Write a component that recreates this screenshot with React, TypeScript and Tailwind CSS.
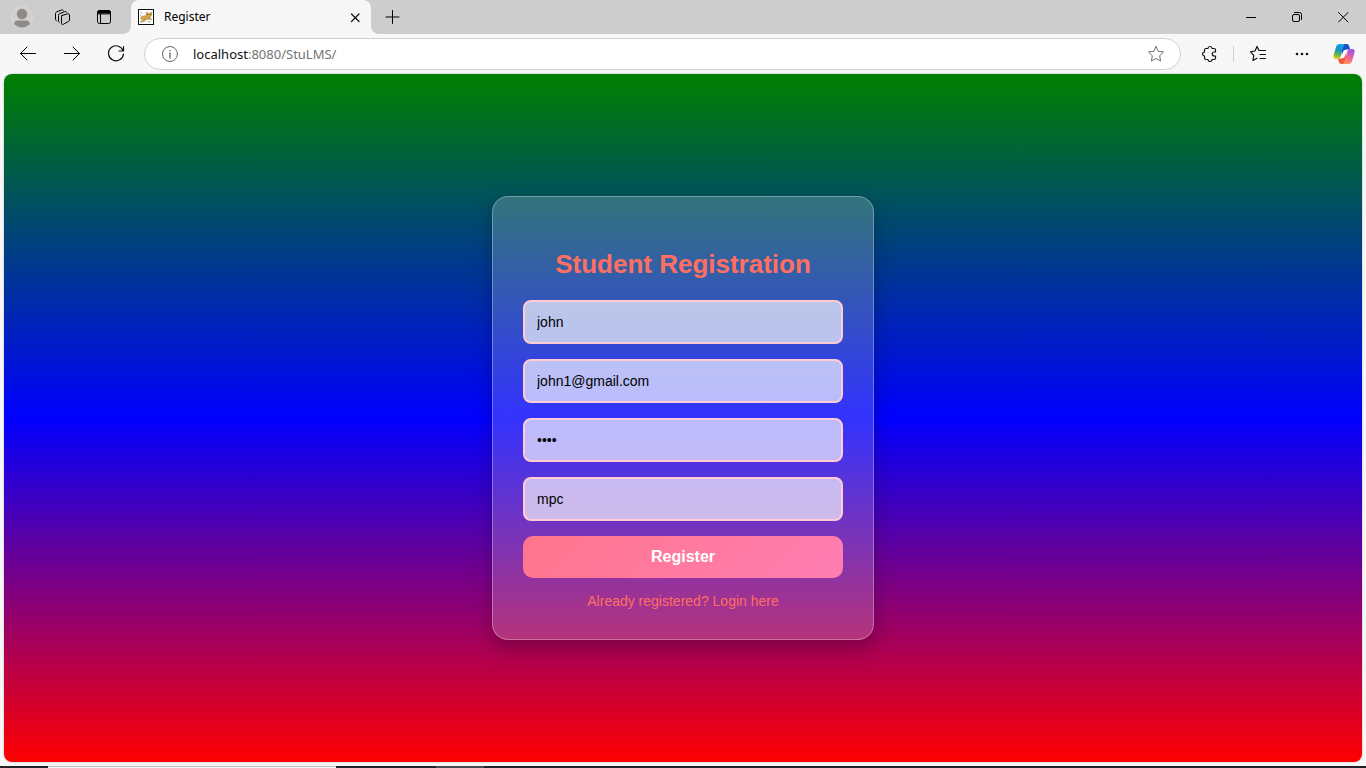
import React, { useState } from "react";

type IconProps = { size?: number; className?: string; stroke?: number; children: React.ReactNode };

function Icon({ size = 16, className = "", stroke = 1, children }: IconProps) {
  return (
    <svg
      width={size}
      height={size}
      viewBox={`0 0 ${size} ${size}`}
      fill="none"
      stroke="currentColor"
      strokeWidth={stroke}
      strokeLinecap="round"
      strokeLinejoin="round"
      className={`shrink-0 ${className}`}
      aria-hidden="true"
    >
      {children}
    </svg>
  );
}

const iconButton = "flex shrink-0 items-center justify-center text-black";

function ProfileIcon() {
  return (
    <svg width="22" height="22" viewBox="0 0 22 22" aria-hidden="true">
      <defs>
        <clipPath id="avatar">
          <circle cx="11" cy="11" r="10.500" />
        </clipPath>
      </defs>
      <circle cx="11" cy="11" r="10.500" fill="#d2d0ce" stroke="#dcdad6" />
      <g fill="#8f8b88" clipPath="url(#avatar)">
        <circle cx="11" cy="8" r="5.200" />
        <path d="M3 22v-3.500c0-2.800 1.500-4 4.300-4h7.400c2.800 0 4.300 1.200 4.300 4V22z" />
      </g>
    </svg>
  );
}

function CatIcon() {
  return (
    <svg width="16" height="16" viewBox="0 0 16 16" aria-hidden="true">
      <rect x="0.500" y="0.500" width="15" height="15" fill="#fff" stroke="#111" />
      <path d="M2.500 9.500C3.500 7.500 5.500 6.500 8 6.800L8.500 3l1.700 1.300h1.600L13.500 3v3.500L12 8.300l1.800 2.700-2.800-.8-2.500.3-2.500 2-3 .5 1.500-2z" fill="#d2a24b" stroke="#a87b35" strokeWidth="0.5" />
      <path d="M2 13.300 4.500 12M2 6.500l2 1M2.500 4.500 4 3.500M9.500 12.500l3 .5" stroke="#888" strokeWidth="0.800" />
      <path d="M9.500 5.500h.8M11.800 5.500h.8" stroke="#222" strokeWidth="0.800" />
    </svg>
  );
}

function CopilotIcon() {
  return (
    <svg width="22" height="22" viewBox="0 0 22 22" aria-hidden="true">
      <defs>
        <linearGradient id="cool" x1="0.6" y1="0" x2="0.35" y2="1">
          <stop offset="0" stopColor="#12a5e8" />
          <stop offset="0.4" stopColor="#1690c8" />
          <stop offset="0.7" stopColor="#55b45c" />
          <stop offset="1" stopColor="#e8ca10" />
        </linearGradient>
        <linearGradient id="warm" x1="0.7" y1="0" x2="0.3" y2="1">
          <stop offset="0" stopColor="#9c50ee" />
          <stop offset="0.500" stopColor="#ee5c9e" />
          <stop offset="1" stopColor="#ff9a50" />
        </linearGradient>
        <linearGradient id="navy" x1="0" y1="0" x2="1" y2="1">
          <stop offset="0" stopColor="#1648b8" />
          <stop offset="1" stopColor="#1f60e0" />
        </linearGradient>
      </defs>
      <path d="M11 1h2.500c1.600 0 2.300.8 2.800 2.500l.9 3H14c-1.700 0-2.600.8-3.200 2.500L9.500 12 8.500 5z" fill="url(#navy)" />
      <path d="M11 21H8.500c-1.600 0-2.300-.8-2.800-2.500l-.9-3H8c1.700 0 2.600-.8 3.200-2.500l1.300-3 1 7z" fill="#ef5a43" />
      <path d="M6.500 1h6.300c-1.300.2-1.900 1.100-2.300 2.500L8 12.500c-.7 2.300-1.500 3.500-3.700 3.500H3C.7 16 0 14.500.6 12.300L3 4c.6-2 1.500-3 3.500-3z" fill="url(#cool)" />
      <path d="M15.500 21H9.200c1.300-.2 1.900-1.100 2.300-2.500L14 9.500C14.700 7.200 15.500 6 17.700 6H19c2.300 0 3 1.500 2.400 3.700L19 18c-.6 2-1.500 3-3.500 3z" fill="url(#warm)" />
      <path d="M11.300 7.200h2.900c-.7.500-1 1.200-1.300 2.300l-1.200 4c-.3.900-.9 1.400-1.700 1.400H7.700c.6-.5.900-1.200 1.200-2.200l1.200-4c.3-.9.600-1.300 1.200-1.500z" fill="#fff" />
    </svg>
  );
}

function TitleBar() {
  return (
    <header className="flex h-[34px] shrink-0 bg-[#cdcdcd]">
      <div className="flex w-[131px] shrink-0 items-center bg-[#f7f7f7]">
        <div className="flex h-full w-full items-center rounded-br-lg bg-[#cdcdcd] pl-[11px]">
          <button type="button" aria-label="Profile" className={iconButton}>
            <ProfileIcon />
          </button>
          <button type="button" aria-label="Workspaces" className={`${iconButton} ml-5`}>
            <Icon size={18}>
              <path d="M9 7.500l5.500-1.700c1-.3 2 .2 2 1.200v5c0 .8-.4 1.300-1.100 1.600l-5.200 2.700c-1 .5-1.700 0-1.700-1V9c0-.8-.1-1.300.5-1.500z" />
              <path d="M6.500 14.500c-.6-.2-1-.6-1-1.400V7.300c0-.9.4-1.400 1.200-1.700l5.100-2c.8-.3 1.500-.1 1.900.6" />
              <path d="M3.500 12.800c-.6-.3-1-.7-1-1.500V5.600c0-.9.4-1.400 1.200-1.700L8.500 2c.8-.3 1.400-.1 1.800.4" />
            </Icon>
          </button>
          <button type="button" aria-label="Tab actions" className={`${iconButton} ml-6`}>
            <Icon size={18}>
              <rect x="2.500" y="2.500" width="13" height="13" rx="2" />
              <path d="M2.500 5.500v-1a2 2 0 0 1 2-2h9a2 2 0 0 1 2 2v1z" fill="currentColor" />
              <path d="M5.500 6v9" />
            </Icon>
          </button>
        </div>
      </div>
      <div className="flex w-60 shrink-0 items-center rounded-t-lg bg-[#f7f7f7] pr-2 pl-[7px]">
        <CatIcon />
        <span className="ml-[10px] flex-1 font-['Noto_Sans',sans-serif] text-xs text-black">Register</span>
        <button type="button" aria-label="Close tab" className={iconButton}>
          <Icon>
            <path d="m4.500 5 7.500 7.500m0-7.500-7.500 7.500" stroke="#111" strokeWidth="1.200" />
          </Icon>
        </button>
      </div>
      <div className="flex min-w-0 flex-1 bg-[#f7f7f7]">
        <div className="flex w-full items-center rounded-bl-lg bg-[#cdcdcd]">
          <button type="button" aria-label="New tab" className={`${iconButton} ml-[13px]`}>
            <Icon size={18}>
              <path d="M8.500 2.500v13m-6.500-6.500h13" />
            </Icon>
          </button>
          <div className="ml-auto flex h-full">
            <button type="button" aria-label="Minimize" className={`${iconButton} w-[46px]`}>
              <Icon><path d="M3.500 8.500h9" /></Icon>
            </button>
            <button type="button" aria-label="Restore" className={`${iconButton} w-[46px]`}>
              <Icon>
                <rect x="3.500" y="5.500" width="7" height="7" rx="1.500" />
                <path d="M5.500 3.500h5a2 2 0 0 1 2 2v5" />
              </Icon>
            </button>
            <button type="button" aria-label="Close" className={`${iconButton} w-[46px]`}>
              <Icon><path d="m3.500 3.500 9.500 9.500m0-9.500L3.500 13" /></Icon>
            </button>
          </div>
        </div>
      </div>
    </header>
  );
}

function AddressBar() {
  return (
    <nav className="flex h-10 shrink-0 items-center pl-[18px] pr-[11px]" aria-label="Browser toolbar">
      <div className="flex gap-6">
        <button type="button" aria-label="Back" className={iconButton}>
          <Icon size={20}><path d="M17.500 9.500h-15m6.500-6.500L2.500 9.500 9 16" /></Icon>
        </button>
        <button type="button" aria-label="Forward" className={iconButton}>
          <Icon size={20}><path d="M2.500 9.500h15M11 3l6.500 6.500L11 16" /></Icon>
        </button>
        <button type="button" aria-label="Refresh" className={iconButton}>
          <Icon size={20}>
            <path d="M17 6.500A7.500 7.500 0 1 0 17.500 10M17.500 2.500v4.500H13" stroke="#111" strokeWidth="1.200" />
          </Icon>
        </button>
      </div>
      <div className="ml-[18px] flex h-8 min-w-0 flex-1 items-center rounded-full border border-[#d1d1d1] bg-white pr-[15px] pl-4">
        <Icon size={18} className="text-[#666]">
          <circle cx="9" cy="9" r="7.500" />
          <path d="M9 8v5M9 5.500v.2" strokeWidth="1.300" />
        </Icon>
        <div className="ml-[14px] flex-1 pt-px font-['Noto_Sans',sans-serif] text-[13px] text-[#111]">
          localhost<span className="text-[#737373]">:8080/StuLMS/</span>
        </div>
        <button type="button" aria-label="Favorite this page" className="text-[#707070]">
          <Icon size={18} className="block">
            <path d="m9 1.500 2.300 4.800 5.200.7-3.800 3.700.9 5.300L9 13.500 4.400 16l.9-5.300L1.500 7l5.200-.7z" />
          </Icon>
        </button>
      </div>
      <button type="button" aria-label="Extensions" className={`${iconButton} ml-5`}>
        <Icon size={18}>
          <path d="M5 3.500h1.900C7 2.300 7.800 1.500 9 1.500s2 .8 2.100 2h1.900c1 0 1.500.5 1.500 1.500v2h-1.200c-1.200 0-2 .8-2 2s.8 2 2 2h1.200v2c0 1-.5 1.500-1.500 1.500h-1.900c-.1 1.200-.9 2-2.100 2s-2-.8-2.100-2H5c-1 0-1.500-.5-1.500-1.500v-2c-1.200-.1-2-.8-2-2s.8-1.900 2-2V5c0-1 .5-1.500 1.500-1.500z" stroke="#111" strokeWidth="1.200" />
        </Icon>
      </button>
      <div className="ml-[14px] h-4 w-px bg-[#cfcfcf]" />
      <button type="button" aria-label="Favorites" className={`${iconButton} ml-[15px]`}>
        <Icon size={18}>
          <path d="M11 5.500h-1L8 1.500 6 6l-4.500.8 3.300 3.500-.8 5.200 4-2.200M11 5.500h5.500M11 9.500h5.500M11 13.500h5.500" stroke="#111" strokeWidth="1.200" />
        </Icon>
      </button>
      <button type="button" aria-label="Settings and more" className={`${iconButton} ml-[26px]`}>
        <Icon size={18}>
          <g fill="#111" stroke="none">
            <circle cx="4" cy="9" r="1.300" />
            <circle cx="9" cy="9" r="1.300" />
            <circle cx="14" cy="9" r="1.300" />
          </g>
        </Icon>
      </button>
      <button type="button" aria-label="Copilot" className={`${iconButton} ml-[22px]`}>
        <CopilotIcon />
      </button>
    </nav>
  );
}

const fields = [
  { name: "username", label: "Name", type: "text", initial: "john" },
  { name: "email", label: "Email", type: "email", initial: "john1@gmail.com" },
  { name: "password", label: "Password", type: "password", initial: "john" },
  { name: "course", label: "Course", type: "text", initial: "mpc" },
];

function RegistrationForm() {
  const [values, setValues] = useState<Record<string, string>>(
    Object.fromEntries(fields.map((f) => [f.name, f.initial])),
  );

  return (
    <form
      onSubmit={(e) => e.preventDefault()}
      className="flex w-full max-w-[382px] flex-col rounded-2xl border border-white/30 bg-white/20 px-[30px] pt-[52px] pb-[30px] text-center shadow-[0_8px_20px_rgba(0,0,0,0.25)]"
    >
      <h1 className="mb-5 text-[26px] leading-[31px] font-bold text-[#ff6f61]">Student Registration</h1>
      <div className="flex flex-col gap-[15px]">
        {fields.map((f) => (
          <input
            key={f.name}
            type={f.type}
            name={f.name}
            aria-label={f.label}
            value={values[f.name]}
            onChange={(e) => setValues({ ...values, [f.name]: e.target.value })}
            className="h-11 w-full rounded-lg border-2 border-[#ffccd5] bg-white/67 px-3 text-sm text-black outline-none"
          />
        ))}
        <button
          type="submit"
          className="h-[42px] rounded-[10px] bg-[linear-gradient(135deg,#ff758c,#ff7eb3)] text-base font-bold text-white"
        >
          Register
        </button>
      </div>
      <a href="#login" className="mt-[15px] text-sm leading-4 text-[#ff6f61]">
        Already registered? Login here
      </a>
    </form>
  );
}

export default function App() {
  return (
    <div className="flex min-h-screen flex-col bg-[#f7f7f7] font-['Liberation_Sans',Arial,sans-serif]">
      <TitleBar />
      <AddressBar />
      <main className="mx-1 mb-1 flex flex-1 items-center justify-center rounded-lg bg-[linear-gradient(to_bottom,green,blue,red)] shadow-[0_0_2px_rgba(0,0,0,0.3)]">
        <RegistrationForm />
      </main>
      <div className="flex h-[2px] shrink-0 bg-[#202124]">
        <div className="ml-12 w-72 border-t border-[#bdbdbd] bg-[#f7f7f7]" />
        <div className="ml-[100px] w-12 bg-[#4b4b4d]" />
      </div>
    </div>
  );
}
